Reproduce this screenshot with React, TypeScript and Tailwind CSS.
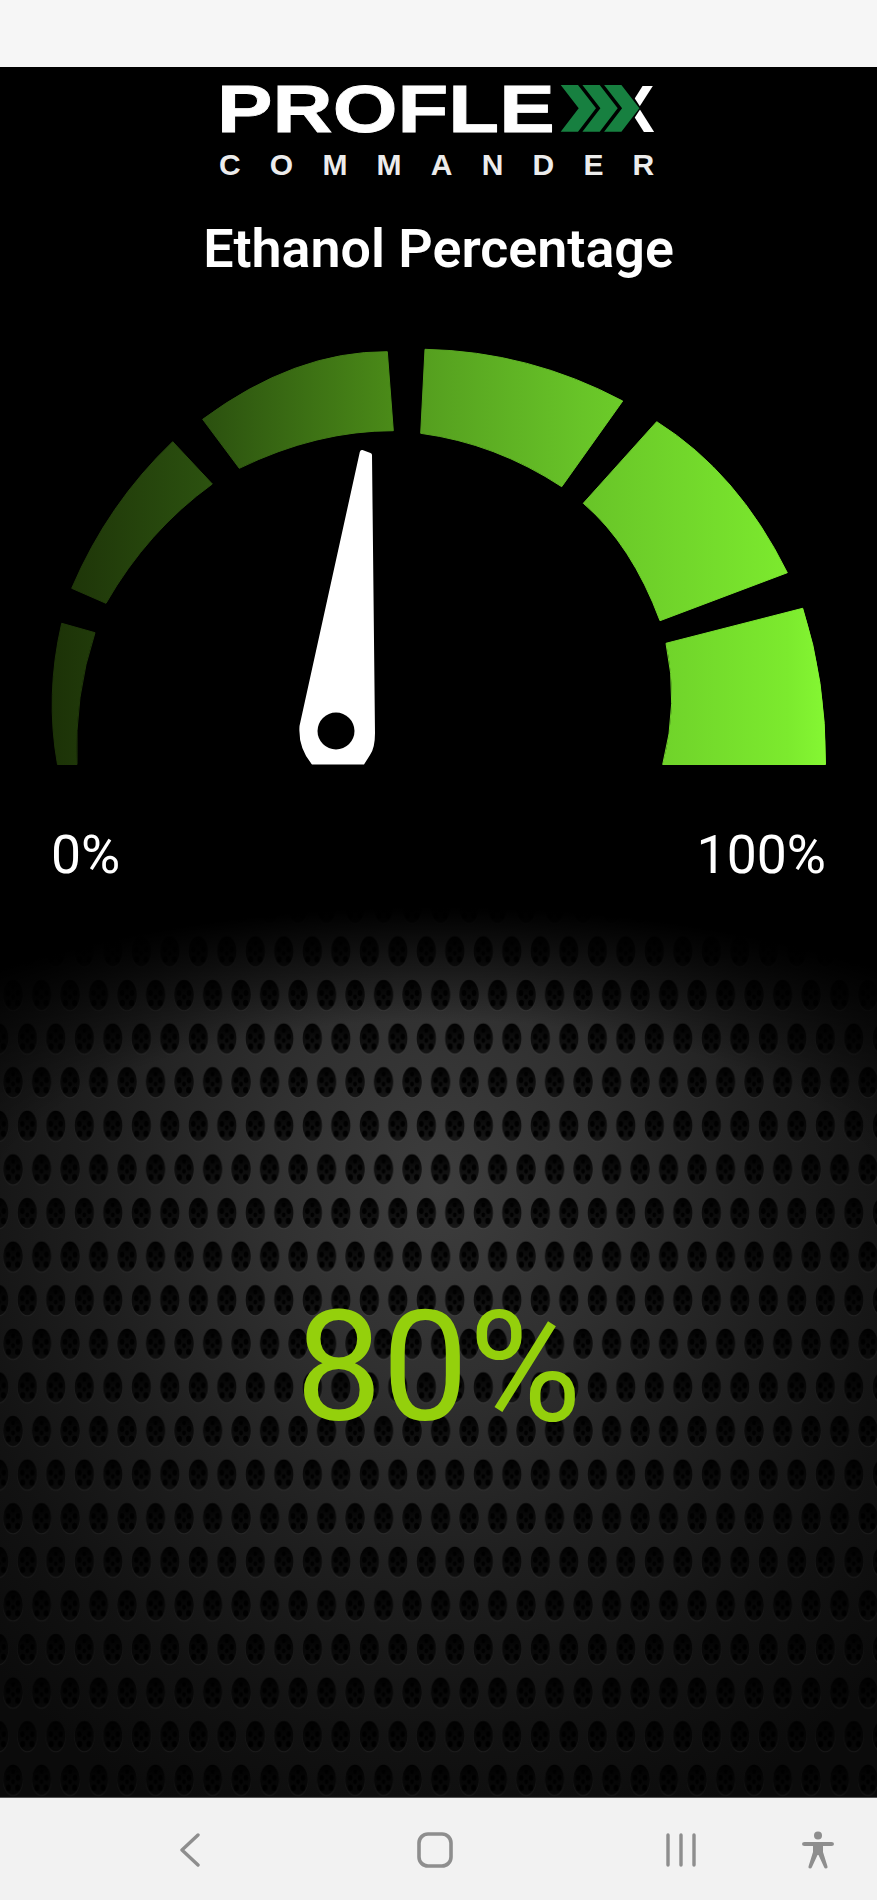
import React from "react";

const roboto = "font-['Roboto',sans-serif]";

function Logo() {
  const chev = [0, 21.7, 43.4];
  return (
    <svg viewBox="0 67 877 113" className="w-[877px] h-[113px] block">
      <text transform="translate(217 132) scale(1.243 1)" x="0" y="0" fontFamily="'Liberation Sans',sans-serif" fontWeight="700" fontSize="67" fill="#fff" stroke="#fff" strokeWidth="0.8">PROFLE</text>
      <text x="610" y="132" fontFamily="'Liberation Sans',sans-serif" fontWeight="700" fontSize="67" fill="#fff">X</text>
      <polygon points="600,82 624,82 641,108 624,134 600,134" fill="#000" />
      {chev.map((o) => (
        <polygon key={o} transform={`translate(${o} 0)`} points="560.7,85 578,85 596,108.3 578,131.7 560.7,131.7 578.7,108.3" fill="#178040" />
      ))}
      <text x="219" y="175" fontFamily="'Liberation Sans',sans-serif" fontWeight="700" fontSize="30" fill="#ececec" letterSpacing="29.2">COMMANDER</text>
    </svg>
  );
}

function Gauge() {
  const segs = [
    "M61.7,623.3 L95,632.7 Q74,696 77,764.5 L57.5,764.5 Q45,695 61.7,623.3 Z",
    "M71.7,588.3 Q107.8,503.6 172.7,441.7 L212.3,484 Q147.4,531 106,603.3 Z",
    "M202.7,419.3 Q295,351 387.3,351.7 L393.3,430.7 Q317,430.5 239.3,468.3 Z",
    "M425,349.3 Q529.5,351.5 622.7,401 L561.7,486.7 Q495.5,443.3 420.7,433.3 Z",
    "M656.7,421.7 Q738,472.8 787.3,572.7 L660,620.7 Q631.7,544.6 583.3,503.3 Z",
    "M802.7,608.3 Q826,680.6 825.5,764.5 L662.7,764.5 Q679,703 666,643.3 Z",
  ];
  return (
    <svg viewBox="0 340 877 430" className="w-[877px] h-[430px] block">
      <defs>
        <linearGradient id="g" gradientUnits="userSpaceOnUse" x1="52" y1="0" x2="826" y2="0">
          <stop offset="0" stopColor="#1c3207" />
          <stop offset="0.06" stopColor="#213b0a" />
          <stop offset="0.195" stopColor="#2b500f" />
          <stop offset="0.437" stopColor="#4a8a18" />
          <stop offset="0.482" stopColor="#559f1f" />
          <stop offset="0.686" stopColor="#68c428" />
          <stop offset="0.95" stopColor="#7cea2e" />
          <stop offset="1" stopColor="#85f733" />
        </linearGradient>
      </defs>
      {segs.map((d, i) => (
        <path key={i} d={d} fill="url(#g)" stroke="url(#g)" strokeWidth="1" strokeLinejoin="round" />
      ))}
      <path
        d="M359.8,452 Q360.5,449.5 362.5,450 L370.5,453 Q372,453.6 372,455 L375,733 Q375,748 370,755 L364,764.5 L312,764.5 Q298,748 299.5,726 Z"
        fill="#fff"
      />
      <circle cx="336" cy="731" r="18.5" fill="#000" />
    </svg>
  );
}

function Perforated() {
  const dots: [number, number, number][] = [
    [0, -8, 1.9],
    [-5, -2, 2.3],
    [5, -2, 2.3],
    [0, 2, 1.9],
    [-4.6, 8, 2.6],
    [4.6, 8, 2.6],
  ];
  const hole = (cx: number, cy: number) => (
    <g key={`${cx}-${cy}`} transform={`translate(${cx} ${cy})`}>
      <ellipse cx="0" cy="0.8" rx="9.9" ry="15.4" fill="#ffffff" fillOpacity="0.05" />
      <ellipse cx="0" cy="0" rx="9.7" ry="15" fill="url(#hole)" />
      {dots.map(([x, y, r], i) => (
        <ellipse key={i} cx={x} cy={y} rx={r} ry={r * 1.25} fill="#000" fillOpacity="0.9" />
      ))}
    </g>
  );
  return (
    <svg className="absolute inset-0 w-full h-full" width="877" height="910" aria-hidden="true">
      <defs>
        <linearGradient id="hole" x1="0" y1="0" x2="0" y2="1">
          <stop offset="0" stopColor="#000" stopOpacity="1" />
          <stop offset="0.4" stopColor="#000" stopOpacity="0.8" />
          <stop offset="1" stopColor="#000" stopOpacity="0.66" />
        </linearGradient>
        <pattern id="perf" patternUnits="userSpaceOnUse" x="13.05" y="42.6" width="28.5" height="87.2">
          {hole(14.25, 21.8)}
          {hole(0, 65.4)}
          {hole(28.5, 65.4)}
        </pattern>
      </defs>
      <rect x="0" y="0" width="877" height="910" fill="url(#perf)" />
    </svg>
  );
}

function Nav() {
  return (
    <div className="h-[103px] bg-[#f2f2f2] border-t border-[#555] flex items-center pl-[180px] pt-[2px]">
      <svg width="20" height="34" viewBox="0 0 20 34" fill="none" stroke="#8e8e8e" strokeWidth="3.4" strokeLinecap="round" strokeLinejoin="round">
        <path d="M18 2 L2 17 L18 32" />
      </svg>
      <svg width="36" height="36" viewBox="0 0 36 36" fill="none" stroke="#8e8e8e" strokeWidth="3.6" className="ml-[217px]">
        <rect x="2" y="2" width="32" height="32" rx="9" />
      </svg>
      <svg width="30" height="34" viewBox="0 0 30 34" fill="none" stroke="#8e8e8e" strokeWidth="3.4" strokeLinecap="round" className="ml-[213px]">
        <path d="M2 2 V32 M15 2 V32 M28 2 V32" />
      </svg>
      <svg width="32" height="38" viewBox="0 0 32 38" fill="#8e8e8e" className="ml-[106px]">
        <circle cx="16" cy="4.5" r="4" />
        <path d="M2.5 11 H29.5 Q32 11 32 13 Q32 15 29.5 15 H21 V21 L25.5 35.5 Q26 37.5 24 37.5 Q22.5 37.5 22 36 L16.5 24 H15.5 L10 36 Q9.5 37.5 8 37.5 Q6 37.5 6.5 35.5 L11 21 V15 H2.5 Q0 15 0 13 Q0 11 2.5 11 Z" />
      </svg>
    </div>
  );
}

export default function App() {
  return (
    <div className={`w-[877px] h-[1900px] flex flex-col bg-black ${roboto}`}>
      <div className="h-[67px] bg-[#f6f6f6] shrink-0" />
      <Logo />
      <h1 className="mt-[32px] h-[74px] text-center text-white text-[53.8px] leading-[74px] font-semibold">Ethanol Percentage</h1>
      <div className="mt-[54px]">
        <Gauge />
      </div>
      <div className="mt-[53px] h-[64px] pl-[51px] pr-[51px] flex justify-between text-white text-[53.5px] leading-[64px]">
        <span>0%</span>
        <span>100%</span>
      </div>
      <div className="relative flex-1 flex justify-center items-start pt-[404px] overflow-hidden bg-[radial-gradient(ellipse_620px_690px_at_50%_300px,#3d3d3d_0%,#303030_28%,#1f1f1f_55%,#121212_80%,#0b0b0b_100%)]">
        <Perforated />
        <div className="absolute inset-x-0 top-0 h-[320px] bg-[radial-gradient(ellipse_720px_300px_at_50%_320px,transparent_62%,rgba(0,0,0,0.6)_85%,#000_100%)]" />
        <span className="relative text-[154px] leading-[154px] text-[#94d00c]">80%</span>
      </div>
      <Nav />
    </div>
  );
}
